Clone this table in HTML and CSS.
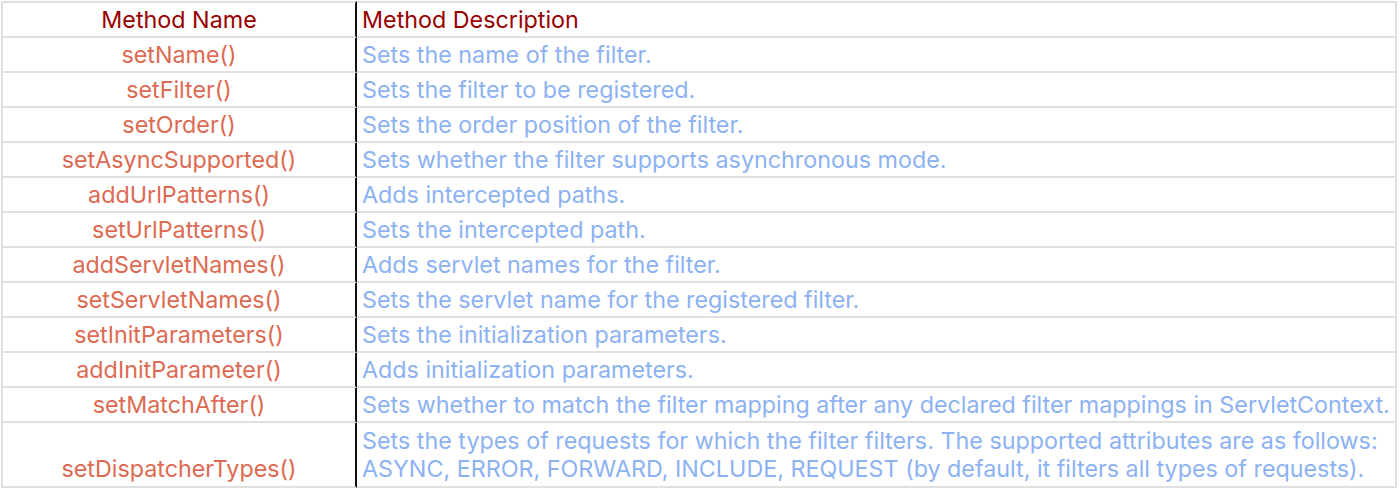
FILE: index.html
```html
<!DOCTYPE html>
<html lang="en">
<head>
<meta charset="utf-8">
<title>Filter registration methods</title>
<link rel="stylesheet" href="styles.css">
</head>
<body>
<div class="sheet">
  <table class="grid">
    <colgroup><col class="c-name"><col class="c-desc"></colgroup>
    <thead>
      <tr><th class="name head">Method Name</th><th class="desc head">Method Description</th></tr>
    </thead>
    <tbody>
      <tr><td class="name">setName()</td><td class="desc">Sets the name of the filter.</td></tr>
      <tr><td class="name">setFilter()</td><td class="desc">Sets the filter to be registered.</td></tr>
      <tr><td class="name">setOrder()</td><td class="desc">Sets the order position of the filter.</td></tr>
      <tr><td class="name">setAsyncSupported()</td><td class="desc">Sets whether the filter supports asynchronous mode.</td></tr>
      <tr><td class="name">addUrlPatterns()</td><td class="desc">Adds intercepted paths.</td></tr>
      <tr><td class="name">setUrlPatterns()</td><td class="desc">Sets the intercepted path.</td></tr>
      <tr><td class="name">addServletNames()</td><td class="desc">Adds servlet names for the filter.</td></tr>
      <tr><td class="name">setServletNames()</td><td class="desc">Sets the servlet name for the registered filter.</td></tr>
      <tr><td class="name">setInitParameters()</td><td class="desc">Sets the initialization parameters.</td></tr>
      <tr><td class="name">addInitParameter()</td><td class="desc">Adds initialization parameters.</td></tr>
      <tr><td class="name">setMatchAfter()</td><td class="desc">Sets whether to match the filter mapping after any declared filter mappings in ServletContext.</td></tr>
      <tr class="tall"><td class="name">setDispatcherTypes()</td><td class="desc">Sets the types of requests for which the filter filters. The supported attributes are as follows:<br>ASYNC, ERROR, FORWARD, INCLUDE, REQUEST (by default, it filters all types of requests).</td></tr>
    </tbody>
  </table>
</div>
</body>
</html>
```

FILE: styles.css
```css
html, body {
  margin: 0;
  padding: 0;
  background: #ffffff;
}

.sheet {
  padding: 1px 0 0 1px;
}

.grid {
  border-collapse: separate;
  border-spacing: 0;
  table-layout: fixed;
  width: 1396px;
  border-left: 2px solid #e0e0e0;
  font-family: Inter, "Noto Sans", sans-serif;
  font-size: 23.3px;
  line-height: 28px;
}

.c-name { width: 354px; }
.c-desc { width: 1040px; }

.grid th,
.grid td {
  height: 31px;
  padding: 0 0 2px 0;
  box-sizing: content-box;
  vertical-align: bottom;
  font-weight: 400;
  border-bottom: 2px solid #e0e0e0;
  white-space: nowrap;
}

.grid thead th {
  border-top: 2px solid #e0e0e0;
}

.grid tbody tr.tall td {
  height: 60px;
  padding-bottom: 3px;
}

.name {
  text-align: center;
  color: #dd6a52;
  border-right: 2px solid #111111;
}

.desc {
  text-align: left;
  color: #8cb2f3;
  padding-left: 5px !important;
  border-right: 2px solid #e0e0e0;
}

.head {
  color: #980000;
}
```
